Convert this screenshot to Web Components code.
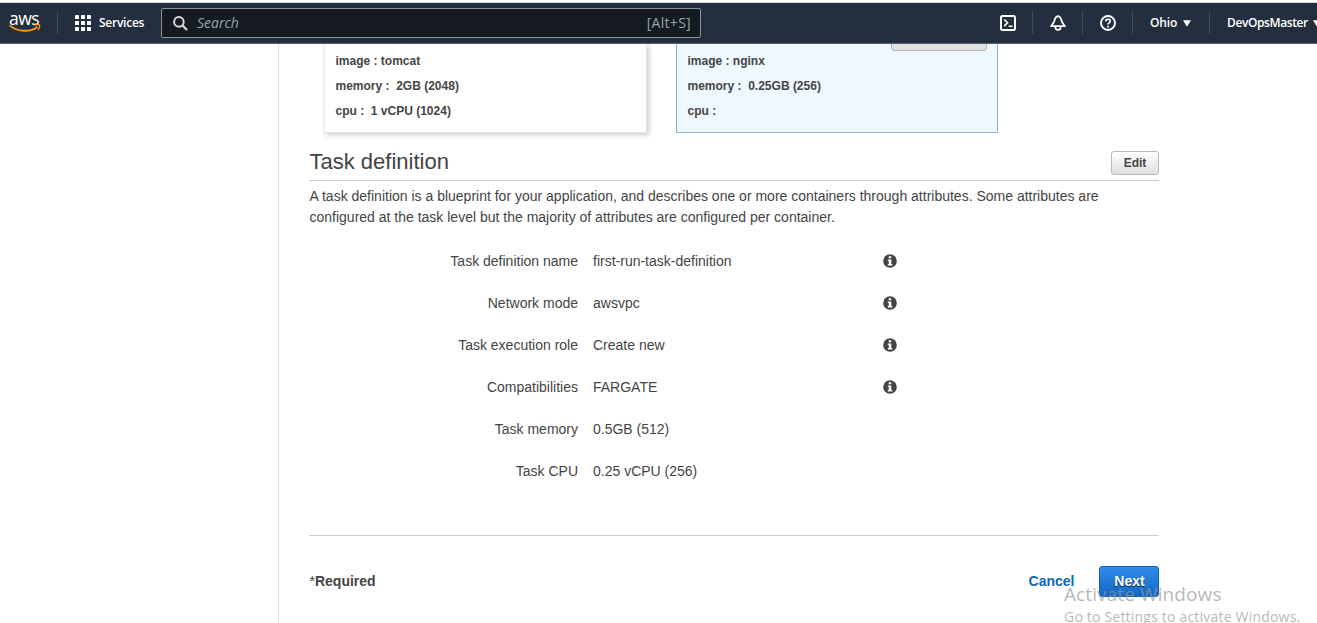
<!DOCTYPE html>
<html lang="en">
<head>
<meta charset="utf-8">
<title>Task definition</title>
<style>
body{margin:0;background:#fff;overflow:hidden;font-family:"Liberation Sans",Arial,sans-serif;color:#444}
</style>
</head>
<body>
<ecs-app></ecs-app>
<script>
const define=(name,html)=>{
  const t=document.createElement('template');
  t.innerHTML=html;
  customElements.define(name,class extends HTMLElement{
    constructor(){super();this.attachShadow({mode:'open'}).append(t.content.cloneNode(true));}
  });
};

define('aws-logo',`<style>
:host{display:block;width:32px;height:26px;position:relative;font:500 17.5px/16px "Open Sans",sans-serif;color:#fff}
span{display:block;letter-spacing:-.5px}
svg{position:absolute;left:0;top:14px}
</style><span>aws</span>
<svg width="32" height="9" viewBox="0 0 32 9" fill="none" stroke="#f7981f"><path d="M.7 1.400C8 8 21 8.600 28.400 3" stroke-width="1.900"/><path d="M25.300 1.200c2.200-.7 4.600-.8 5.200 0 .4.800-.3 3.100-1.700 4.700" stroke-width="1.300"/></svg>`);

define('nav-divider',`<style>:host{display:block;width:1px;height:22px;background:#414d5c}</style>`);

define('services-menu',`<style>
:host{display:flex;align-items:center;color:#fff;font:600 12px/20px "Open Sans",sans-serif}
svg{margin-right:8px}span{width:46px;letter-spacing:-.25px}
</style><svg width="16" height="16" fill="#fff"><g id="g"><rect width="4" height="4" rx=".6"/><rect x="6" width="4" height="4" rx=".6"/><rect x="12" width="4" height="4" rx=".6"/></g><use href="#g" y="6"/><use href="#g" y="12"/></svg><span><slot></slot></span>`);

define('nav-search',`<style>
:host{display:flex;box-sizing:border-box;width:540px;height:30px;border:1px solid #879596;border-radius:2px;background:#161b22;align-items:center;padding:0 9px 0 11px;color:#95a5a6;font:14px/20px "Open Sans",sans-serif}
svg{margin-right:9px}i{flex:1}span{letter-spacing:.3px}
</style><svg width="15" height="15" fill="none" stroke="#d5dbdb" stroke-width="2"><circle cx="5.900" cy="5.900" r="4.800"/><path d="M9.300 9.300 14 14" stroke-width="2.300"/></svg><i>Search</i><span>[Alt+S]</span>`);

define('nav-tools',`<style>
:host{display:flex;align-items:center;height:40px;color:#fff;font:600 12px/20px "Open Sans",sans-serif}
svg{display:block;flex:none}span{white-space:nowrap}
.o{width:27px;letter-spacing:-.15px}.u{width:80px;letter-spacing:-.4px}
</style>
<svg width="16" height="16" fill="none" stroke="#fff" stroke-width="2"><rect x="1" y="1" width="14" height="14" rx="1.500"/><path d="m4.200 4.500 3.300 3.300-3.300 3.300M8.600 11.200h4" stroke-width="1.600"/></svg>
<nav-divider style="margin:0 17px 0 16px"></nav-divider>
<svg width="16" height="16" fill="none" stroke="#fff" stroke-width="1.700"><path d="M8 1.200C6.200 1.500 5.100 2.800 4.700 5 4.300 7.500 3 9 1 11.200h14C13 9 11.700 7.500 11.300 5 10.900 2.800 9.800 1.500 8 1.200Z" stroke-linejoin="round"/><path d="M5.500 11.700v1.100c0 1.200 1 2.100 2.500 2.100s2.500-.9 2.500-2.100v-1.100"/></svg>
<nav-divider style="margin:0 17px 0 16px"></nav-divider>
<svg width="16" height="16" fill="none" stroke="#fff" stroke-width="1.900"><circle cx="8" cy="8" r="7"/><path d="M5.700 6.600c0-1.500 1-2.300 2.300-2.300s2.300.8 2.300 2c0 1.500-2.300 1.600-2.300 3.200" stroke-width="1.600"/><path d="M8 10.700v1.700" stroke-width="1.700"/></svg>
<nav-divider style="margin:0 17px 0 16px"></nav-divider>
<span class="o">Ohio</span><svg style="margin-left:6px" width="8" height="7" fill="#fff"><path d="M0 .3h8L4 6.700z"/></svg>
<nav-divider style="margin:0 17px 0 18px"></nav-divider>
<span class="u">DevOpsMaster</span><svg style="margin-left:6px" width="8" height="7" fill="#fff"><path d="M0 .3h8L4 6.700z"/></svg>`);

define('top-nav',`<style>
:host{display:flex;height:40px;margin-top:2px;border-top:1px solid #d9dadb;border-bottom:1px solid #596272;background:#232f3e;align-items:center;overflow:hidden}
aws-logo{margin:-1px 16px 0 9px}nav-search{margin-left:16px}services-menu{margin-left:17px}
nav-tools{margin-left:299px}
aws-logo,services-menu,nav-search,nav-divider,nav-tools{flex:none}
</style><aws-logo></aws-logo><nav-divider></nav-divider><services-menu>Services</services-menu><nav-search></nav-search><nav-tools></nav-tools>`);

define('container-card',`<style>
:host{display:block;position:relative;box-sizing:border-box;width:323px;height:89px;padding:5px 10.500px 0;border:1px solid #e6e6e6;border-top:0;background:#fff;box-shadow:2px 2px 5px rgba(0,0,0,.2);font:bold 12px/25px "Liberation Sans",sans-serif;white-space:pre}
:host([selected]){width:322px;border-color:#87b3dd;background:#f0f8ff;box-shadow:none}
</style><slot></slot>`);
define('card-stub',`<style>:host{display:block;position:absolute;right:10px;top:0;box-sizing:border-box;width:96px;height:7px;border:1px solid #b4b4b4;border-top:0;border-radius:0 0 4px 4px;background:#e1e1e1}</style>`);
define('card-line',`<style>:host{display:block;height:25px}</style><slot></slot>`);

define('edit-button',`<style>
:host{display:block;box-sizing:border-box;width:48px;height:24px;border:1px solid #b8b8b8;border-radius:3px;background:linear-gradient(#fff,#dedede);text-align:center;font:bold 12px/22px "Liberation Sans",sans-serif;color:#444}
</style><slot></slot>`);

define('section-head',`<style>
:host{display:flex;justify-content:space-between;box-sizing:border-box;height:48px;border-bottom:1px solid #ccc;font-size:22px;line-height:57px}
edit-button{margin-top:18px}span{padding-left:.5px}
</style><span><slot></slot></span><edit-button>Edit</edit-button>`);

define('info-icon',`<style>:host{display:block;width:14px;height:14px}svg{display:block}</style>
<svg width="14" height="14"><circle cx="7" cy="7" r="6.800" fill="#444"/><path d="M5.700 2.200h2.500v2H5.700zM4.800 5.400h3.500v4.500h1v1.500H4.800V9.900h1V6.900h-1z" fill="#fff"/></svg>`);

define('def-row',`<style>
:host{display:grid;grid-template-columns:269px 275px 14px;column-gap:15px;height:42px;align-items:center;font-size:14px;line-height:20px}
.l{text-align:right}
info-icon{display:none}:host([info]) info-icon{display:block}
</style><span class="l"><slot name="label"></slot></span><span><slot></slot></span><info-icon></info-icon>`);

define('form-actions',`<style>
:host{display:flex;align-items:center;border-top:1px solid #ccc;height:91px;margin-top:43px;font:bold 14px/20px "Liberation Sans",sans-serif}
.r{flex:1;padding-left:.5px}.r,.c{margin-bottom:2px}.c{color:#1166bb;margin-right:24.500px}
.n{box-sizing:border-box;width:60px;height:31px;border:1px solid #1661ae;border-radius:3px;background:linear-gradient(#2f8cec,#1467c4);color:#fff;text-align:center;line-height:28px;text-shadow:0 1px 1px rgba(0,0,0,.7);padding-left:1px}
</style><span class="r"><span style="font-weight:400">*</span>Required</span><span class="c">Cancel</span><span class="n">Next</span>`);

define('windows-watermark',`<style>
:host{position:absolute;left:1064px;top:582px;display:block;white-space:nowrap;color:rgba(150,150,150,.7);font-family:"Open Sans",sans-serif}
.a{font-size:19px;line-height:24px;letter-spacing:.1px}.b{font-size:14px;line-height:20px;margin-top:1px;letter-spacing:.2px}
</style><div class="a">Activate Windows</div><div class="b">Go to Settings to activate Windows.</div>`);

define('ecs-app',`<style>
:host{display:block;position:relative;height:623px;overflow:hidden}
.body{display:flex;height:579px}
aside{width:278px;border-right:1px solid #ddd;flex:none}
main{width:850px;margin-left:30px}
.cards{display:flex;gap:29px;padding-left:15px}
p{margin:5px 0 12px .5px;font-size:14px;line-height:21px;white-space:nowrap}
</style><top-nav></top-nav>
<div class="body"><aside></aside><main>
<div class="cards">
<container-card><card-line>image : tomcat</card-line><card-line>memory :  2GB (2048)</card-line><card-line>cpu :  1 vCPU (1024)</card-line></container-card>
<container-card selected><card-line>image : nginx</card-line><card-line>memory :  0.25GB (256)</card-line><card-line>cpu :</card-line><card-stub></card-stub></container-card>
</div>
<section-head>Task definition</section-head>
<p>A task definition is a blueprint for your application, and describes one or more containers through attributes. Some attributes are<br>configured at the task level but the majority of attributes are configured per container.</p>
<def-row info><span slot="label">Task definition name</span>first-run-task-definition</def-row>
<def-row info><span slot="label">Network mode</span>awsvpc</def-row>
<def-row info><span slot="label">Task execution role</span>Create new</def-row>
<def-row info><span slot="label">Compatibilities</span>FARGATE</def-row>
<def-row><span slot="label">Task memory</span>0.5GB (512)</def-row>
<def-row><span slot="label">Task CPU</span>0.25 vCPU (256)</def-row>
<form-actions></form-actions>
</main></div>
<windows-watermark></windows-watermark>`);
</script>
</body>
</html>
